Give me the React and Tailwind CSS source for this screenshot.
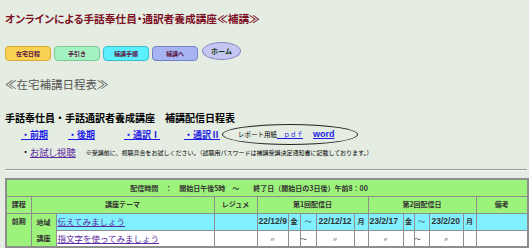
import React from 'react';

const btn = 'h-[15px] w-[46px] rounded-[4px] border flex items-center justify-center text-[6px] font-bold text-[#5a1040]';

export default function App() {
  return (
    <div className="min-h-[248px] w-[529px] overflow-hidden bg-[#e5ede3] pl-[5px] pt-[11px] font-['Noto_Sans_CJK_JP',sans-serif] text-black">
      {/* title */}
      <h1 className="h-[15px] text-[10.7px] leading-[15px] font-bold text-[#7d1025] [font-feature-settings:'palt']">
        オンラインによる手話奉仕員・通訳者養成講座≪補講≫
      </h1>

      {/* nav buttons */}
      <div className="mt-[16px] flex h-[19px] items-end gap-[3px]">
        <a href="#" className={`${btn} bg-[#f8d254] border-[#d9a932]`}>在宅日程</a>
        <a href="#" className={`${btn} bg-[#a4f2c2] border-[#76c896]`}>手引き</a>
        <a href="#" className={`${btn} bg-[#5cf0fc] border-[#34bfd0]`}>補講手順</a>
        <a href="#" className={`${btn} bg-[#a6b4f2] border-[#7482c8]`}>補講へ</a>
        <a href="#" className="ml-[1px] self-start flex h-[18px] w-[39px] items-center justify-center rounded-[50%] border border-[#8486c4] bg-[#c6c6f2] text-[7px] font-bold text-[#0c3a10]">
          ホーム
        </a>
      </div>

      {/* page heading */}
      <h2 className="mt-[15px] h-[16px] text-[11.5px] leading-[16px] text-[#555]">≪在宅補講日程表≫</h2>

      <h3 className="mt-[19px] h-[13px] text-[10px] leading-[13px] font-bold">
        手話奉仕員・手話通訳者養成講座　補講配信日程表
      </h3>

      {/* term links */}
      <div className="flex h-[21px] items-center text-[9px] font-bold">
        <div className="ml-[16px] w-[47px]"><a href="#" className="text-[#1c1ce6] underline">・前期</a></div>
        <div className="w-[56px]"><a href="#" className="text-[#1c1ce6] underline">・後期</a></div>
        <div className="w-[60px]"><a href="#" className="text-[#1c1ce6] underline">・通訳Ⅰ</a></div>
        <div className="w-[38px]"><a href="#" className="text-[#1c1ce6] underline">・通訳Ⅱ</a></div>
        <div className="flex h-[21px] w-[136px] items-center rounded-[50%] border border-[#222] pl-[15px]">
          <span className="text-[6.5px] font-normal">レポート用紙</span>
          <a href="#" className="text-[6.5px] font-normal text-[#1c1ce6] underline">　ｐｄｆ</a>
          <a href="#" className="ml-[10px] font-['Liberation_Sans',sans-serif] text-[9px] font-bold text-[#1c1ce6] underline">word</a>
        </div>
      </div>

      {/* trial */}
      <div className="mt-[1px] flex h-[12px] items-center">
        <span className="ml-[16px] text-[9px]">・</span>
        <a href="#" className="text-[9.5px] text-[#5a2aa0] underline [font-feature-settings:'palt']">お試し視聴</a>
        <span className="ml-[10px] text-[6px]">※受講前に、視聴具合をお試しください。（試聴用パスワードは補講受講決定通知書に記載しております。）</span>
      </div>

      <hr className="mt-[11px] mr-[2px] border-t border-b border-t-[#9a9a9a] border-b-[#fbfbfb]" />

      {/* schedule table */}
      <table className="mt-[7px] w-[522px] table-fixed border-collapse border-2 border-[#8e8e8e] bg-[#9df27c] text-[7px] text-[#333]">
        <colgroup>
          <col className="w-[25px]" />
          <col className="w-[25px]" />
          <col className="w-[158px]" />
          <col className="w-[43px]" />
          <col className="w-[31px]" />
          <col className="w-[12px]" />
          <col className="w-[16px]" />
          <col className="w-[38px]" />
          <col className="w-[14px]" />
          <col className="w-[35px]" />
          <col className="w-[11px]" />
          <col className="w-[15px]" />
          <col className="w-[34px]" />
          <col className="w-[13px]" />
          <col className="w-[52px]" />
        </colgroup>
        <tbody>
          <tr className="h-[17px]">
            <td colSpan={15} className="border border-[#8e8e8e] pr-[36px] text-center font-bold">
              配信時間　：　開始日午後5時　～　　終了日（開始日の3日後）午前8：00
            </td>
          </tr>
          <tr className="h-[17px] font-bold text-center">
            <td className="border border-[#8e8e8e]">課程</td>
            <td colSpan={2} className="border border-[#8e8e8e]">講座テーマ</td>
            <td className="border border-[#8e8e8e]">レジュメ</td>
            <td colSpan={5} className="border border-[#8e8e8e]">第1回配信日</td>
            <td colSpan={5} className="border border-[#8e8e8e]">第2回配信日</td>
            <td className="border border-[#8e8e8e]">備考</td>
          </tr>
          <tr className="h-[17px] text-[8.5px] font-bold">
            <td rowSpan={2} className="border border-[#8e8e8e] pt-[2px] text-center align-top text-[7px]">前期</td>
            <td rowSpan={2} className="border border-[#8e8e8e] text-center text-[7px] leading-[16px]">地域<br />講座</td>
            <td className="border border-[#8e8e8e] bg-[#80f0fe] pl-[1px] text-[8.5px] font-normal">
              <a href="#" className="text-[#5a2aa0] underline">伝えてみましょう</a>
            </td>
            <td className="border border-[#8e8e8e] bg-[#80f0fe]" />
            <td className="border border-[#8e8e8e] bg-[#80f0fe] pl-[1px] font-['Liberation_Sans',sans-serif]">22/12/9</td>
            <td className="border border-[#8e8e8e] bg-[#80f0fe] text-center text-[7px]">金</td>
            <td className="border border-[#8e8e8e] bg-[#80f0fe] text-center text-[7px] font-normal">～</td>
            <td className="border border-[#8e8e8e] bg-[#80f0fe] pl-[2px] font-['Liberation_Sans',sans-serif]">22/12/12</td>
            <td className="border border-[#8e8e8e] bg-[#80f0fe] text-center text-[7px]">月</td>
            <td className="border border-[#8e8e8e] bg-[#80f0fe] pl-[1px] font-['Liberation_Sans',sans-serif]">23/2/17</td>
            <td className="border border-[#8e8e8e] bg-[#80f0fe] text-center text-[7px]">金</td>
            <td className="border border-[#8e8e8e] bg-[#80f0fe] text-center text-[7px] font-normal">～</td>
            <td className="border border-[#8e8e8e] bg-[#80f0fe] pl-[2px] font-['Liberation_Sans',sans-serif]">23/2/20</td>
            <td className="border border-[#8e8e8e] bg-[#80f0fe] text-center text-[7px]">月</td>
            <td className="border border-[#8e8e8e] bg-[#80f0fe]" />
          </tr>
          <tr className="h-[17px] bg-white text-center text-[6px]">
            <td className="border border-[#8e8e8e] pl-[1px] text-left text-[8.5px]">
              <a href="#" className="text-[#5a2aa0] underline">指文字を使ってみましょう</a>
            </td>
            <td className="border border-[#8e8e8e]" />
            <td className="border border-[#8e8e8e]">〃</td>
            <td className="border border-[#8e8e8e]" />
            <td className="border border-[#8e8e8e] text-left">～</td>
            <td className="border border-[#8e8e8e]">〃</td>
            <td className="border border-[#8e8e8e]" />
            <td className="border border-[#8e8e8e]">〃</td>
            <td className="border border-[#8e8e8e]" />
            <td className="border border-[#8e8e8e] text-left">～</td>
            <td className="border border-[#8e8e8e]">〃</td>
            <td className="border border-[#8e8e8e]" />
            <td className="border border-[#8e8e8e]" />
          </tr>
        </tbody>
      </table>
    </div>
  );
}
